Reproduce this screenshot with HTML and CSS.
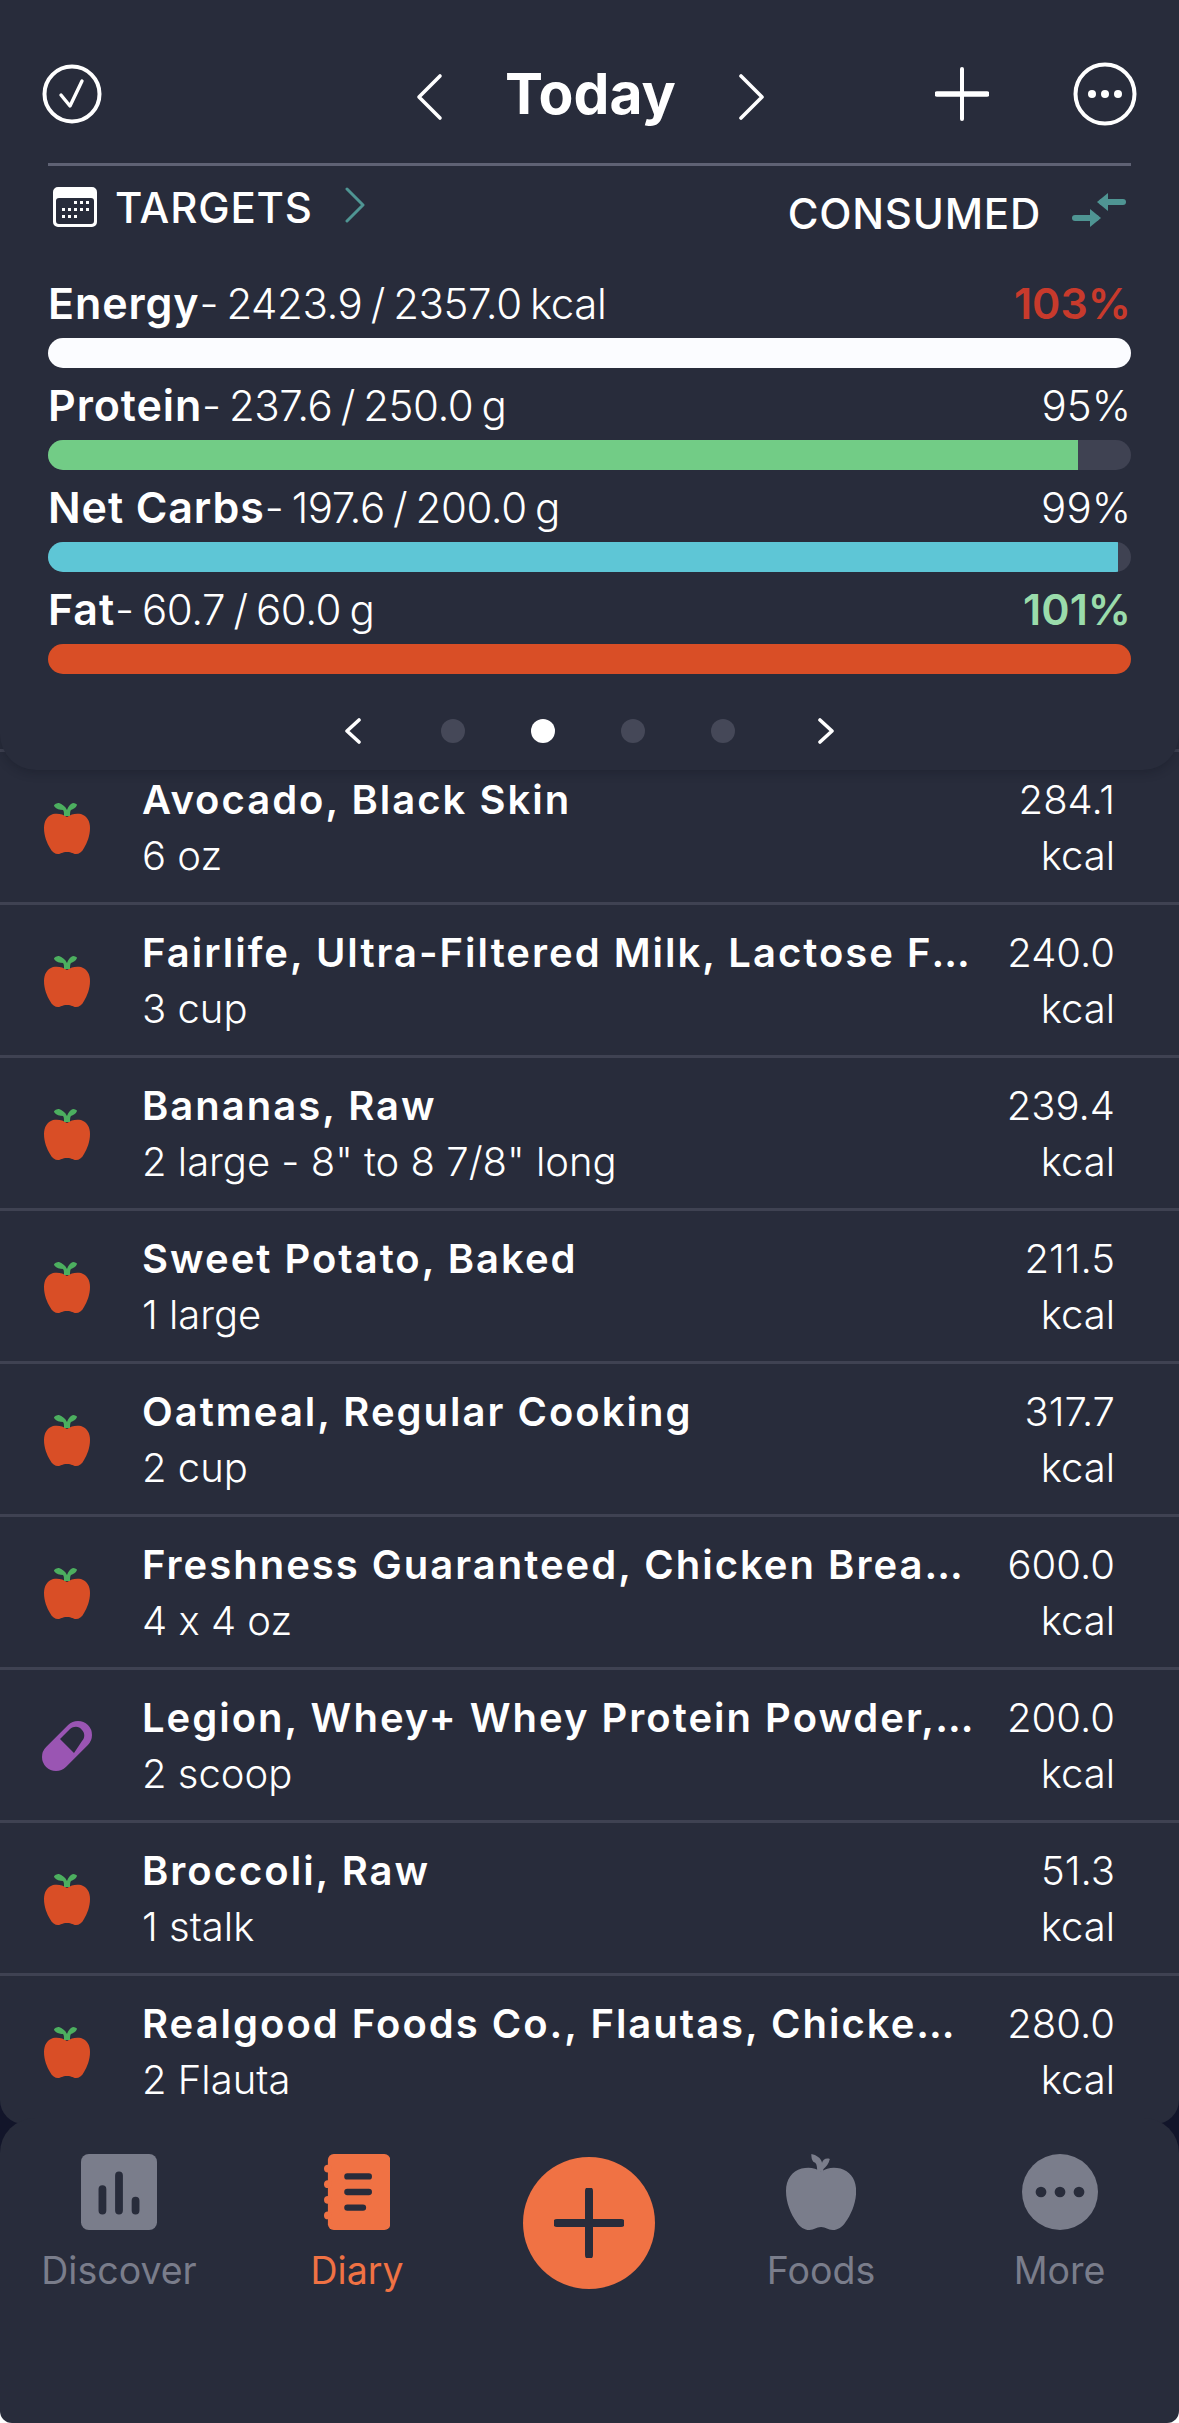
FILE: index.html
```html
<!DOCTYPE html>
<html lang="en">
<head>
<meta charset="utf-8">
<title>Today</title>
<link rel="stylesheet" href="styles.css">
</head>
<body>
<svg class="defs" width="0" height="0" aria-hidden="true">
  <symbol id="apple" viewBox="0 0 46 52">
    <path fill="#d94e26" d="M23 15c4-3 9-4 14-3 6 2 9 7 9 14 0 8-3 15-6 20-2 4-5 6-8 6-3 0-4-2-9-2s-6 2-9 2c-3 0-6-2-8-6C3 41 0 34 0 26c0-7 3-12 9-14 5-1 10 0 14 3z"/>
    <path fill="#4caf5f" d="M20 14c0-3 0-5-1-6-3 0-7-1-9-4 0-2 3-3 5-3 3 1 6 3 8 7 1-3 3-6 6-7 2 0 4 1 4 2-1 3-4 4-6 5-1 1-1 4-1 6z"/>
  </symbol>
  <symbol id="pill" viewBox="0 0 50 50">
    <path d="M14 36L36 14" fill="none" stroke="#9a55b3" stroke-width="28" stroke-linecap="round"/>
    <path fill="#282c3b" d="M18 18l10-10c4-3 9-3 12 1 3 3 3 8 0 11l-8 12z"/>
  </symbol>
</svg>

<div class="phone">
  <header class="panel">
    <div class="topbar">
      <svg class="ico-check" viewBox="0 0 60 60"><circle cx="30" cy="30" r="27.500" fill="none" stroke="#fff" stroke-width="4"/><path d="M19 31l9 11 12-25" fill="none" stroke="#fff" stroke-width="3.400" stroke-linecap="round" stroke-linejoin="round"/></svg>
      <div class="daynav">
        <svg class="ico-chev" viewBox="0 0 28 48"><path d="M25 3L4 24l21 21" fill="none" stroke="#fff" stroke-width="3.600" stroke-linecap="round" stroke-linejoin="round"/></svg>
        <h1 class="today">Today</h1>
        <svg class="ico-chev" viewBox="0 0 28 48"><path d="M3 3l21 21L3 45" fill="none" stroke="#fff" stroke-width="3.600" stroke-linecap="round" stroke-linejoin="round"/></svg>
      </div>
      <div class="topactions">
        <svg class="ico-plus" viewBox="0 0 54 54"><path d="M27 2v50" fill="none" stroke="#fff" stroke-width="4" stroke-linecap="round"/><path d="M2 27h50" fill="none" stroke="#fff" stroke-width="5.500" stroke-linecap="round"/></svg>
        <svg class="ico-more" viewBox="0 0 64 64"><circle cx="32" cy="32" r="29.500" fill="none" stroke="#fff" stroke-width="4"/><circle cx="19" cy="32" r="4" fill="#fff"/><circle cx="32" cy="32" r="4" fill="#fff"/><circle cx="45" cy="32" r="4" fill="#fff"/></svg>
      </div>
    </div>

    <div class="rule"></div>

    <div class="modes">
      <div class="mode-left">
        <svg class="ico-cal" viewBox="0 0 44 40"><path fill="#fff" fill-rule="evenodd" d="M5 0h34a5 5 0 0 1 5 5v30a5 5 0 0 1-5 5H5a5 5 0 0 1-5-5V5a5 5 0 0 1 5-5zM6 11a3 3 0 0 0-3 3v20a3 3 0 0 0 3 3h32a3 3 0 0 0 3-3V14a3 3 0 0 0-3-3z"/><g fill="#fff"><rect x="21" y="14" width="3" height="3"/><rect x="27" y="14" width="3" height="3"/><rect x="33" y="14" width="3" height="3"/><rect x="9" y="21" width="3" height="3"/><rect x="15" y="21" width="3" height="3"/><rect x="21" y="21" width="3" height="3"/><rect x="27" y="21" width="3" height="3"/><rect x="33" y="21" width="3" height="3"/><rect x="9" y="28" width="3" height="3"/><rect x="15" y="28" width="3" height="3"/><rect x="21" y="28" width="3" height="3"/></g></svg>
        <span class="mode-label">TARGETS</span>
        <svg class="ico-tchev" viewBox="0 0 20 36"><path d="M2 2l16 16L2 34" fill="none" stroke="#4f9593" stroke-width="3" stroke-linecap="round" stroke-linejoin="round"/></svg>
      </div>
      <div class="mode-right">
        <span class="mode-label">CONSUMED</span>
        <svg class="ico-swap" viewBox="0 0 54 34"><path d="M30 9h21" stroke="#4f9593" stroke-width="6" stroke-linecap="round" fill="none"/><path d="M25 9l11-9v18z" fill="#4f9593"/><path d="M3 25h21" stroke="#4f9593" stroke-width="6" stroke-linecap="round" fill="none"/><path d="M29 25l-11 9V16z" fill="#4f9593"/></svg>
      </div>
    </div>

    <div class="macros">
      <div class="macro">
        <div class="macro-head"><span><b>Energy</b>- 2423.9 / 2357.0 kcal</span><span class="pct over">103%</span></div>
        <div class="track"><div class="fill white" style="width:100%"></div></div>
      </div>
      <div class="macro">
        <div class="macro-head"><span><b>Protein</b>- 237.6 / 250.0 g</span><span class="pct">95%</span></div>
        <div class="track"><div class="fill green" style="width:95.1%"></div></div>
      </div>
      <div class="macro">
        <div class="macro-head"><span><b>Net Carbs</b>- 197.6 / 200.0 g</span><span class="pct">99%</span></div>
        <div class="track"><div class="fill cyan" style="width:98.8%"></div></div>
      </div>
      <div class="macro">
        <div class="macro-head"><span><b>Fat</b>- 60.7 / 60.0 g</span><span class="pct good">101%</span></div>
        <div class="track"><div class="fill orange" style="width:100%"></div></div>
      </div>
    </div>

    <div class="pager">
      <svg class="ico-pchev prev" viewBox="0 0 18 26"><path d="M15 2L3 13l12 11" fill="none" stroke="#fff" stroke-width="3.600" stroke-linecap="round" stroke-linejoin="round"/></svg>
      <span class="dot"></span><span class="dot on"></span><span class="dot"></span><span class="dot"></span>
      <svg class="ico-pchev next" viewBox="0 0 18 26"><path d="M3 2l12 11L3 24" fill="none" stroke="#fff" stroke-width="3.600" stroke-linecap="round" stroke-linejoin="round"/></svg>
    </div>
  </header>

  <main class="list">
    <div class="row"><svg class="food-ico"><use href="#apple"/></svg><div class="food"><div class="name">Avocado, Black Skin</div><div class="amt">6 oz</div></div><div class="kcal"><div>284.1</div><div>kcal</div></div></div>
    <div class="row"><svg class="food-ico"><use href="#apple"/></svg><div class="food"><div class="name">Fairlife, Ultra-Filtered Milk, Lactose Free, Reduced Fat</div><div class="amt">3 cup</div></div><div class="kcal"><div>240.0</div><div>kcal</div></div></div>
    <div class="row"><svg class="food-ico"><use href="#apple"/></svg><div class="food"><div class="name">Bananas, Raw</div><div class="amt">2 large - 8" to 8 7/8" long</div></div><div class="kcal"><div>239.4</div><div>kcal</div></div></div>
    <div class="row"><svg class="food-ico"><use href="#apple"/></svg><div class="food"><div class="name">Sweet Potato, Baked</div><div class="amt">1 large</div></div><div class="kcal"><div>211.5</div><div>kcal</div></div></div>
    <div class="row"><svg class="food-ico"><use href="#apple"/></svg><div class="food"><div class="name">Oatmeal, Regular Cooking</div><div class="amt">2 cup</div></div><div class="kcal"><div>317.7</div><div>kcal</div></div></div>
    <div class="row"><svg class="food-ico"><use href="#apple"/></svg><div class="food"><div class="name">Freshness Guaranteed, Chicken Breast, Boneless</div><div class="amt">4 x 4 oz</div></div><div class="kcal"><div>600.0</div><div>kcal</div></div></div>
    <div class="row"><svg class="food-ico pill"><use href="#pill"/></svg><div class="food"><div class="name">Legion, Whey+ Whey Protein Powder, Chocolate</div><div class="amt">2 scoop</div></div><div class="kcal"><div>200.0</div><div>kcal</div></div></div>
    <div class="row"><svg class="food-ico"><use href="#apple"/></svg><div class="food"><div class="name">Broccoli, Raw</div><div class="amt">1 stalk</div></div><div class="kcal"><div>51.3</div><div>kcal</div></div></div>
    <div class="row"><svg class="food-ico"><use href="#apple"/></svg><div class="food"><div class="name">Realgood Foods Co., Flautas, Chicken Breast</div><div class="amt">2 Flauta</div></div><div class="kcal"><div>280.0</div><div>kcal</div></div></div>
  </main>

  <nav class="tabbar">
    <div class="tab">
      <svg class="tab-ico" viewBox="0 0 78 78"><rect width="78" height="78" rx="8" fill="#7a7d8b"/><g fill="none" stroke="#282c3b" stroke-width="8" stroke-linecap="round"><path d="M22 36v22M39 22v36M56 48v10"/></g></svg>
      <span>Discover</span>
    </div>
    <div class="tab active">
      <svg class="tab-ico" viewBox="0 0 68 78"><rect x="4" width="64" height="78" rx="6" fill="#f07244"/><g fill="#f07244"><circle cx="4" cy="15" r="4"/><circle cx="4" cy="31" r="4"/><circle cx="4" cy="47" r="4"/><circle cx="4" cy="63" r="4"/></g><g fill="none" stroke="#282c3b" stroke-width="6.500" stroke-linecap="round"><path d="M24 23h22M24 39h22M24 55h16"/></g></svg>
      <span>Diary</span>
    </div>
    <button class="fab" type="button" aria-label="Add">
      <svg viewBox="0 0 70 70"><path d="M35 3v64M3 35h64" fill="none" stroke="#282c3b" stroke-width="8" stroke-linecap="round"/></svg>
    </button>
    <div class="tab">
      <svg class="tab-ico" viewBox="0 0 72 78"><path fill="#7a7d8b" d="M36 18c6-4 13-5 20-3 10 3 16 11 16 23 0 12-5 24-11 32-3 5-8 8-13 8-5 0-7-3-12-3s-7 3-12 3c-5 0-10-3-13-8C5 62 0 50 0 38c0-12 6-20 16-23 7-2 14-1 20 3z"/><path fill="#7a7d8b" d="M32 17c0-5-1-7-2-8-3-1-4-4-4-9 5 1 10 4 11 9 1-3 3-5 8-4-1 5-4 8-6 10-1 1-1 2-1 4z"/></svg>
      <span>Foods</span>
    </div>
    <div class="tab">
      <svg class="tab-ico" viewBox="0 0 78 78"><circle cx="39" cy="39" r="39" fill="#7a7d8b"/><g fill="#282c3b"><circle cx="19.500" cy="39" r="5.500"/><circle cx="39" cy="39" r="5.500"/><circle cx="58.500" cy="39" r="5.500"/></g></svg>
      <span>More</span>
    </div>
  </nav>
</div>
</body>
</html>
```

FILE: styles.css
```css
* { box-sizing: border-box; }
html, body { margin: 0; padding: 0; }
body {
  width: 1179px;
  height: 2423px;
  overflow: hidden;
  background: linear-gradient(#12152a 2400px, #fff 2400px);
  font-family: Inter, "Noto Sans", sans-serif;
  font-feature-settings: "calt" 0;
  color: #fff;
}
.defs { position: absolute; }
.phone {
  position: relative;
  height: 2423px;
  display: flex;
  flex-direction: column;
}

/* header panel */
.panel {
  position: relative;
  z-index: 2;
  height: 770px;
  flex: none;
  padding: 62px 48px 0;
  background: #282c3b;
  border-radius: 0 0 36px 36px;
  box-shadow: 0 3px 10px rgba(15, 17, 28, .28);
}
.topbar {
  position: relative;
  height: 64px;
  display: flex;
  align-items: center;
  justify-content: space-between;
}
.ico-check { width: 60px; height: 60px; margin-left: -6px; }
.daynav {
  position: absolute;
  left: 367px;
  top: 2px;
  display: flex;
  align-items: center;
  gap: 62px;
}
.ico-chev { width: 28px; height: 48px; margin-top: 5px; }
.today {
  margin: 0;
  font-size: 57px;
  line-height: 60px;
  font-weight: 700;
}
.topactions { display: flex; align-items: center; gap: 84px; margin-right: -6px; }
.ico-plus { width: 54px; height: 54px; }
.ico-more { width: 64px; height: 64px; }
.rule { height: 3px; margin-top: 37px; background: #5f6274; }
.modes {
  display: flex;
  justify-content: space-between;
  padding: 18px 5px 0 5px;
  height: 113px;
}
.mode-left, .mode-right { display: flex; align-items: center; }
.mode-left { height: 46px; }
.mode-right { height: 46px; margin-top: 6px; }
.mode-label { font-size: 42px; font-weight: 500; letter-spacing: .8px; }
.ico-cal { width: 44px; height: 40px; margin-right: 18px; }
.ico-tchev { width: 20px; height: 36px; margin-left: 32px; margin-top: -4px; }
.ico-swap { width: 54px; height: 34px; margin-left: 31px; margin-top: -6px; }
.macros { display: flex; flex-direction: column; gap: 13px; }
.macro-head {
  display: flex;
  justify-content: space-between;
  align-items: baseline;
  height: 56px;
  font-size: 42px;
  line-height: 49px;
  font-weight: 300;
  letter-spacing: -.45px;
  word-spacing: -3px;
}
.macro-head b { font-size: 43px; font-weight: 600; letter-spacing: .9px; word-spacing: 0; }
.pct { font-weight: 300; letter-spacing: 0; }
.pct.over { color: #c83a2c; font-size: 43px; font-weight: 600; }
.pct.good { color: #9adcab; font-size: 43px; font-weight: 600; }
.track {
  height: 30px;
  margin-top: 3px;
  border-radius: 15px;
  overflow: hidden;
  background: #3f4252;
}
.fill { height: 100%; }
.white { background: #fbfcff; }
.green { background: #72cc86; }
.cyan { background: #5ec6d6; }
.orange { background: #d94e26; }
.pager {
  display: flex;
  justify-content: center;
  align-items: center;
  gap: 66px;
  margin-top: 44px;
}
.ico-pchev { width: 18px; height: 26px; }
.ico-pchev.prev { margin-right: 13px; }
.ico-pchev.next { margin-left: 16px; }
.dot { width: 24px; height: 24px; border-radius: 50%; background: #454858; }
.dot.on { background: #fff; }

/* food list */
.list {
  flex: 1;
  min-height: 0;
  margin-top: -60px;
  padding-top: 39px;
  background: #282c3b;
  border-radius: 0 0 24px 24px;
  overflow: hidden;
}
.row {
  height: 153px;
  display: flex;
  align-items: center;
  padding: 0 64px 0 44px;
  border-top: 3px solid #3f4252;
}
.food-ico { width: 46px; height: 52px; flex: none; margin-top: 2px; }
.food-ico.pill { width: 50px; height: 50px; margin-left: -2px; margin-right: -2px; }
.food { flex: 1; min-width: 0; margin-left: 52px; margin-top: 2px; }
.name, .amt, .kcal div { line-height: 56px; font-size: 40px; }
.name {
  font-weight: 600;
  letter-spacing: 2px;
  overflow: hidden;
  white-space: nowrap;
  text-overflow: ellipsis;
}
.amt { font-weight: 300; }
.kcal { flex: none; width: 116px; margin-left: 24px; margin-top: 2px; text-align: right; font-weight: 300; }

/* tab bar */
.tabbar {
  position: relative;
  z-index: 3;
  flex: none;
  height: 305px;
  margin-top: -6px;
  padding-top: 36px;
  display: grid;
  grid-template-columns: 238px 238px 226px 238px 239px;
  background: #282c3b;
  border-radius: 35px 35px 12px 12px;
}
.tab {
  display: flex;
  flex-direction: column;
  align-items: center;
  gap: 18px;
  height: 140px;
  font-size: 37.500px;
  line-height: 46px;
  color: #7a7d8b;
}
.tab.active { color: #f07244; }
.tab-ico { height: 78px; width: auto; display: block; }
.fab {
  width: 132px;
  height: 132px;
  margin: 3px auto 0;
  padding: 0;
  border: 0;
  border-radius: 50%;
  background: #f07244;
  display: flex;
  align-items: center;
  justify-content: center;
}
.fab svg { width: 70px; height: 70px; }
```
